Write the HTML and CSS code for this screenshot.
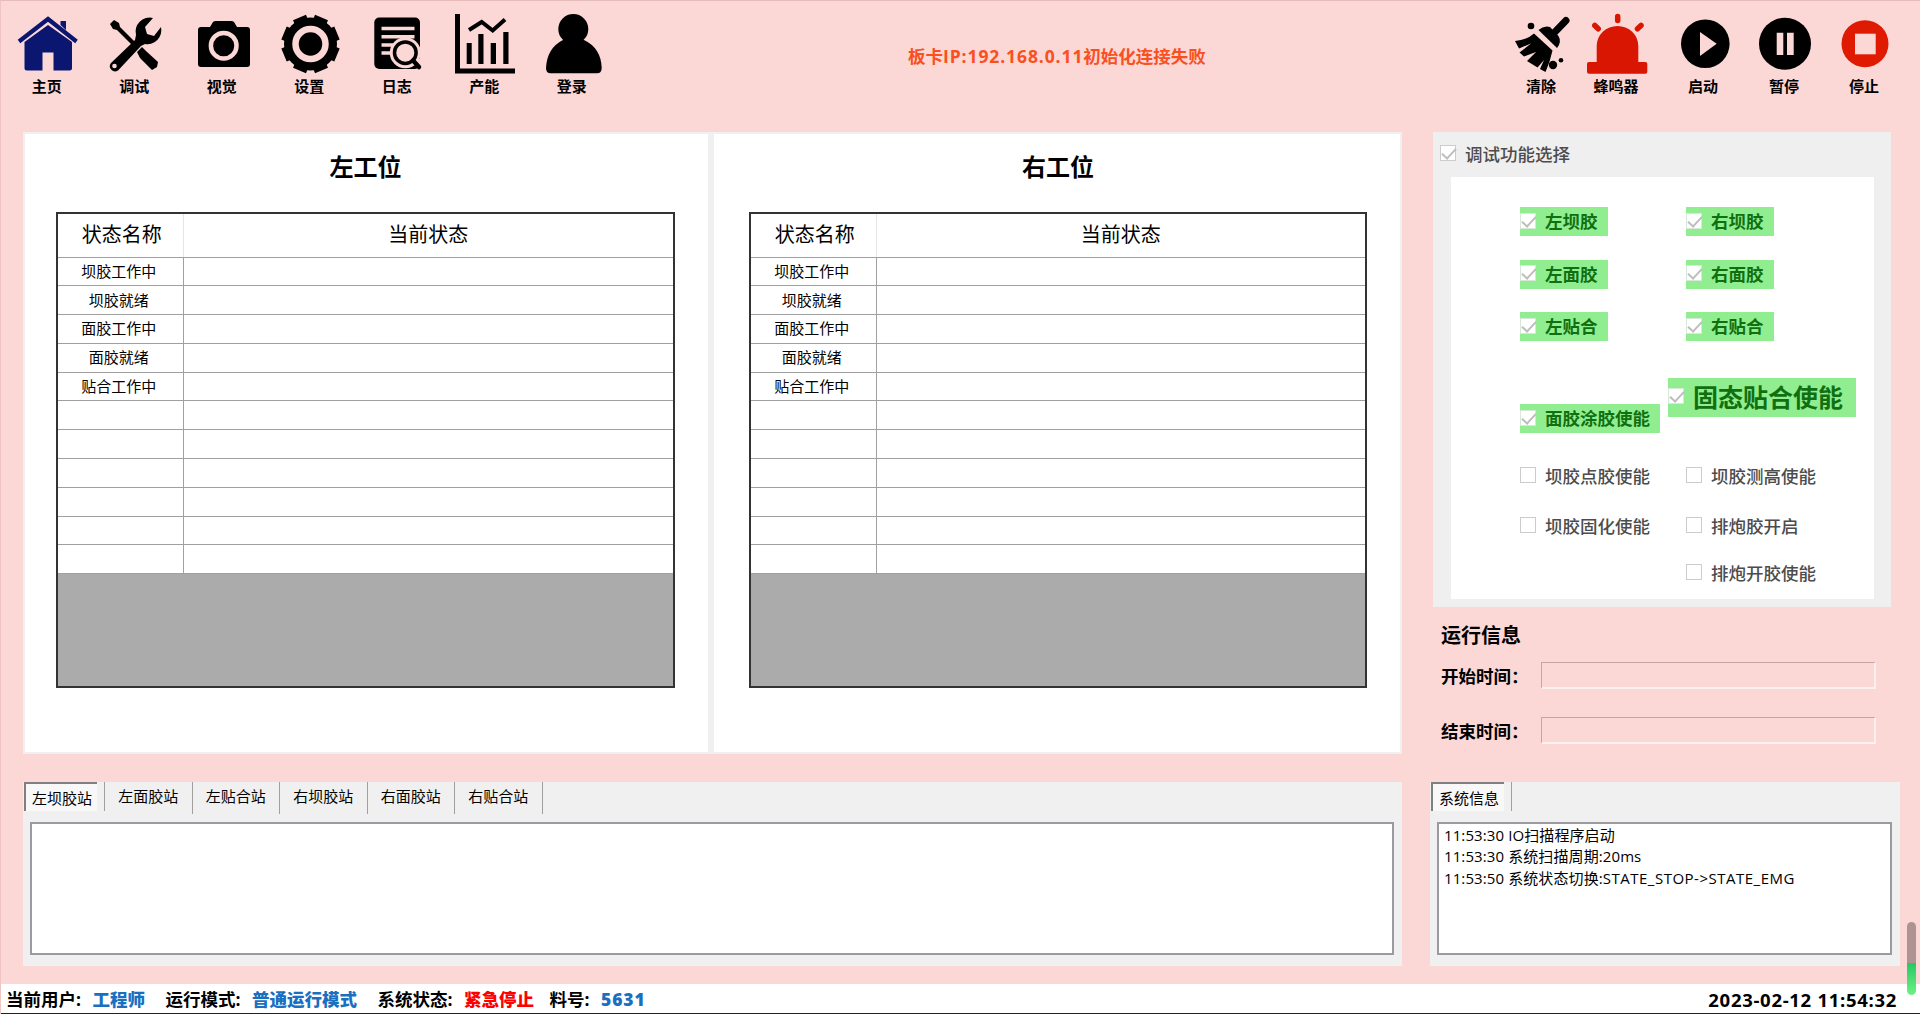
FILE: index.html
```html
<!DOCTYPE html>
<html lang="zh-CN">
<head>
    <meta charset="UTF-8">
    <meta name="viewport" content="width=device-width, initial-scale=1.0">
    <title>主页</title>
    <link rel="stylesheet" href="styles.css">
</head>
<body>
    <header class="toolbar">
        <nav class="menu">
            <button class="tool">
                <svg viewBox="0 0 64 64" fill="#0a1670"><path d="M45.500 9H51V18L45.500 13Z"/><path d="M4 29.500L33 7L61.500 29.500" fill="none" stroke="#0a1670" stroke-width="4.200"/><path d="M9.500 30L33 13L57 30V56Q57 58.500 54.500 58.500H38.500V40.500H27.500V58.500H12Q9.500 58.500 9.500 56Z"/></svg>
                <span>主页</span>
            </button>
            <button class="tool">
                <svg viewBox="0 0 64 64"><path d="M8 12L12 8L17 11L18 15L34 31L31 34L15 18L11 17Z"/><path d="M35 40L40 35L44 39L56 50L55 55L50 58L38 46Z"/><path d="M51 6A14 14 0 0 0 34 23L33 28L9 51A5.200 5.200 0 0 0 16 58.500L39 34L43 32A14 14 0 0 0 59 15L52 24L45 22L43 15Z"/><circle cx="12.500" cy="54" r="2.300" class="cut"/></svg>
                <span>调试</span>
            </button>
            <button class="tool">
                <svg viewBox="0 0 64 64"><path d="M11 15H20L23 10Q24 9 26 9H41Q43 9 44 10L47 15H57Q60 15 60 18V52Q60 55 57 55H11Q8 55 8 52V18Q8 15 11 15Z"/><circle cx="33.700" cy="33.700" r="12.800" fill="none" class="ring"/></svg>
                <span>视觉</span>
            </button>
            <button class="tool">
                <svg viewBox="0 0 64 64"><circle cx="33.500" cy="32" r="26.500"/><g stroke="#000" stroke-width="14"><path d="M22.500 5.500L44.500 58.500M44.500 5.500L22.500 58.500M7 21L60 43M60 21L7 43"/></g><circle cx="33.500" cy="32" r="15" fill="none" class="ring wide"/></svg>
                <span>设置</span>
            </button>
            <button class="tool">
                <svg viewBox="0 0 64 64"><rect x="9.300" y="5.500" width="45.700" height="51.500" rx="5"/><path d="M16.500 16.500H49.500M16.500 24.700H49.500M16.500 33H28M16.500 41H26" class="line"/><circle cx="40.300" cy="40.700" r="15.500" class="cut"/><path d="M50 50L55 58L60 52L57 45Z" class="cut"/><circle cx="40.300" cy="40.700" r="10.800" fill="none" stroke="#000" stroke-width="3.500"/><path d="M48 48.500L54 55" stroke="#000" stroke-width="4.500" stroke-linecap="round"/></svg>
                <span>日志</span>
            </button>
            <button class="tool">
                <svg viewBox="0 0 64 64"><path d="M3 2H8V56.500H63V61.500H3ZM14.700 31H19.700V52H14.700ZM26.300 22H31.500V52H26.300ZM38.700 31H44V52H38.700ZM51.300 20H56.500V52H51.300Z"/><path d="M17 18L29.700 10L40.700 18.500L53 7.500" fill="none" stroke="#000" stroke-width="4"/></svg>
                <span>产能</span>
            </button>
            <button class="tool">
                <svg viewBox="0 0 64 64"><circle cx="33.300" cy="17" r="15"/><path d="M23 28H44Q61 36 61.700 56Q61.700 61.300 57 61.300H10.500Q6 61.300 6 56Q7 36 23 28Z"/></svg>
                <span>登录</span>
            </button>
        </nav>
        <p class="alarm">板卡<span>IP:192.168.0.11</span>初始化连接失败</p>
        <div class="control">
            <button class="tool clear">
                <svg viewBox="0 0 64 64"><path d="M57 8.500L44 22" stroke="#000" stroke-width="7" stroke-linecap="round"/><path d="M29.500 18Q35 13 41 15L49.500 24Q53 30 48 36Z"/><path d="M25 21.500L43.500 38.500Q41 50 36.500 60L31 57L35 48L28.500 55.500L18 49L27 40L15 44.500L10.500 40.500L22 31.500L10 36.500L6 29Q18 28 25 21.500Z"/><circle cx="22" cy="14" r="3.300"/><circle cx="44" cy="53" r="4.200"/><circle cx="52" cy="48.300" r="2.300"/></svg>
                <span>清除</span>
            </button>
            <button class="tool buzzer">
                <svg viewBox="0 0 64 64" fill="#d81601"><path d="M12.700 51V34A20.800 20 0 0 1 54.300 34V51Z"/><rect x="3" y="50" width="60.300" height="11.700" rx="2"/><path d="M33.700 4.500V8.500M10.800 13.500L14.200 16.800M57 13.500L53.500 16.800" stroke="#d81601" stroke-width="5.500" stroke-linecap="round"/></svg>
                <span>蜂鸣器</span>
            </button>
            <button class="tool start">
                <svg viewBox="0 0 64 64"><circle cx="34.300" cy="31.700" r="24.300"/><path d="M29 20L45.700 31.700L29 44Z" class="cut"/></svg>
                <span>启动</span>
            </button>
            <button class="tool pause">
                <svg viewBox="0 0 64 64"><circle cx="33" cy="31.700" r="26"/><path d="M24.700 20.700H31.300V43H24.700ZM35 20.700H41.700V43H35Z" class="cut"/></svg>
                <span>暂停</span>
            </button>
            <button class="tool stop">
                <svg viewBox="0 0 64 64" fill="#e01a00"><circle cx="33" cy="31.700" r="23.500"/><path d="M23 21.700H43.700V42.300H23Z" class="cut"/></svg>
                <span>停止</span>
            </button>
        </div>
    </header>

    <main class="content">
        <div class="left">
            <div class="stations">
                <section class="station">
                    <h2>左工位</h2>
                    <div class="grid-view">
                        <table>
                            <tr><th>状态名称</th><th>当前状态</th></tr>
                            <tr><td>坝胶工作中</td><td></td></tr>
                            <tr><td>坝胶就绪</td><td></td></tr>
                            <tr><td>面胶工作中</td><td></td></tr>
                            <tr><td>面胶就绪</td><td></td></tr>
                            <tr><td>贴合工作中</td><td></td></tr>
                            <tr><td></td><td></td></tr>
                            <tr><td></td><td></td></tr>
                            <tr><td></td><td></td></tr>
                            <tr><td></td><td></td></tr>
                            <tr><td></td><td></td></tr>
                            <tr><td></td><td></td></tr>
                        </table>
                    </div>
                </section>
                <section class="station">
                    <h2>右工位</h2>
                    <div class="grid-view">
                        <table>
                            <tr><th>状态名称</th><th>当前状态</th></tr>
                            <tr><td>坝胶工作中</td><td></td></tr>
                            <tr><td>坝胶就绪</td><td></td></tr>
                            <tr><td>面胶工作中</td><td></td></tr>
                            <tr><td>面胶就绪</td><td></td></tr>
                            <tr><td>贴合工作中</td><td></td></tr>
                            <tr><td></td><td></td></tr>
                            <tr><td></td><td></td></tr>
                            <tr><td></td><td></td></tr>
                            <tr><td></td><td></td></tr>
                            <tr><td></td><td></td></tr>
                            <tr><td></td><td></td></tr>
                        </table>
                    </div>
                </section>
            </div>
            <section class="tab-panel">
                <div class="tabs">
                    <span class="tab active">左坝胶站</span>
                    <span class="tab">左面胶站</span>
                    <span class="tab">左贴合站</span>
                    <span class="tab">右坝胶站</span>
                    <span class="tab">右面胶站</span>
                    <span class="tab">右贴合站</span>
                </div>
                <div class="log"></div>
            </section>
        </div>

        <aside class="right">
            <section class="debug">
                <label class="check title"><i class="box on"></i>调试功能选择</label>
                <div class="options">
                    <div class="column">
                        <label class="check green"><i class="box on"></i>左坝胶</label>
                        <label class="check green"><i class="box on"></i>左面胶</label>
                        <label class="check green"><i class="box on"></i>左贴合</label>
                        <label class="check green coat"><i class="box on"></i>面胶涂胶使能</label>
                        <label class="check first"><i class="box"></i>坝胶点胶使能</label>
                        <label class="check second"><i class="box"></i>坝胶固化使能</label>
                    </div>
                    <div class="column">
                        <label class="check green"><i class="box on"></i>右坝胶</label>
                        <label class="check green"><i class="box on"></i>右面胶</label>
                        <label class="check green"><i class="box on"></i>右贴合</label>
                        <label class="check green solid"><i class="box on"></i>固态贴合使能</label>
                        <label class="check first"><i class="box"></i>坝胶测高使能</label>
                        <label class="check second"><i class="box"></i>排炮胶开启</label>
                        <label class="check third"><i class="box"></i>排炮开胶使能</label>
                    </div>
                </div>
            </section>
            <section class="run-info">
                <h3>运行信息</h3>
                <div class="field"><span>开始时间：</span><div class="value"></div></div>
                <div class="field"><span>结束时间：</span><div class="value"></div></div>
            </section>
            <section class="tab-panel system">
                <div class="tabs"><span class="tab active">系统信息</span></div>
                <div class="log">
                    <p>11:53:30 IO扫描程序启动</p>
                    <p>11:53:30 系统扫描周期:20ms</p>
                    <p>11:53:50 系统状态切换:<span>STATE_STOP-&gt;STATE_EMG</span></p>
                </div>
            </section>
        </aside>
    </main>

    <footer class="status">
        <span class="item">当前用户:<b>工程师</b></span>
        <span class="item">运行模式:<b>普通运行模式</b></span>
        <span class="item">系统状态:<b class="emg">紧急停止</b></span>
        <span class="item part">料号:<b>5631</b></span>
        <time>2023-02-12 11:54:32</time>
    </footer>
    <div class="level"></div>
</body>
</html>
```
FILE: styles.css
```css
* {
    box-sizing: border-box;
}
body {
    margin: 0;
    height: 1014px;
    display: flex;
    flex-direction: column;
    overflow: hidden;
    background-color: #fbd7d5;
    color: #000;
    font-family: "Open Sans", "Noto Sans CJK SC", sans-serif;
    font-size: 15px;
    border-top: 1px solid #e6bcbb;
    border-left: 1px solid #efc6c4;
}
h2, h3, p {
    margin: 0;
}

/* toolbar */
.toolbar {
    display: flex;
    height: 131px;
    padding: 11px 0 0 2px;
}
.menu, .control {
    display: flex;
}
.menu {
    width: 905px;
}
.tool {
    width: 87.5px;
    height: 88px;
    padding: 0;
    border: 0;
    background: none;
    display: flex;
    flex-direction: column;
    align-items: center;
    font-family: inherit;
    font-size: 15px;
    font-weight: 700;
    line-height: 20px;
    color: #000;
}
.tool svg {
    width: 64px;
    height: 64px;
    flex: none;
}
.cut {
    fill: #fbd7d5;
}
.ring {
    stroke: #fbd7d5;
    stroke-width: 4.5;
}
.ring.wide {
    stroke-width: 6.5;
}
.line {
    stroke: #fbd7d5;
    stroke-width: 3.5;
}
.alarm {
    width: 596px;
    padding-top: 32px;
    color: #f8501e;
    font-size: 17.5px;
    font-weight: 700;
    line-height: 24px;
}
.alarm span {
    letter-spacing: 0.9px;
}
.clear {
    width: 74px;
}
.buzzer {
    width: 76px;
}
.start {
    width: 98px;
}
.pause {
    width: 64px;
}
.stop {
    width: 96px;
}

/* main area */
.content {
    display: flex;
    gap: 28px;
    height: 852px;
    padding-left: 22px;
}
.left {
    width: 1379px;
}
.stations {
    display: flex;
    gap: 6px;
    height: 622px;
    margin-bottom: 28px;
    padding: 2px;
    background-color: #f0f0f0;
}
.station {
    width: 683px;
    padding: 0 33px 0 31px;
    background-color: #fff;
}
.station + .station {
    width: 686px;
    padding: 0 33px 0 35px;
}
.station h2 {
    height: 78px;
    padding-top: 16px;
    text-align: center;
    font-size: 24px;
    font-family: "Liberation Serif", "Noto Sans CJK SC", serif;
    font-weight: 700;
    line-height: 36px;
}
.grid-view {
    height: 476px;
    border: 2px solid #333;
    background-color: #ababab;
}
table {
    width: 100%;
    border-collapse: collapse;
    table-layout: fixed;
    background-color: #fff;
}
tr {
    height: 28.8px;
}
tr:first-child {
    height: 43px;
}
th, td {
    padding: 0;
    border-bottom: 1px solid #a0a0a0;
    text-align: center;
    line-height: 22px;
}
th {
    font-size: 20px;
    font-weight: 400;
}
th:first-child {
    width: 125px;
    padding-left: 3px;
    border-right: 1px solid #e5e5e5;
}
td:first-child {
    padding-right: 3px;
    padding-bottom: 1px;
    border-right: 1px solid #a0a0a0;
}

/* tab panels */
.tab-panel {
    height: 184px;
    padding: 0 8px 0 7px;
    background-color: #f0f0f0;
}
.tabs {
    display: flex;
    height: 40px;
    margin-left: -6px;
}
.tab {
    width: 87.5px;
    height: 32px;
    border-right: 1px solid #a0a0a0;
    text-align: center;
    line-height: 28px;
}
.tab.active {
    width: 73px;
    height: 29px;
    margin-right: 8px;
    padding-left: 1px;
    border: solid #808080;
    border-width: 2px 0 0 2px;
    background-color: #f8f8f8;
    box-shadow: 7px 0 0 #f0f0f0, 8px 0 0 #a0a0a0;
    line-height: 28px;
}
.log {
    height: 133px;
    padding: 1px 5px;
    border: 2px solid #9a9aa0;
    background-color: #fff;
}
.log p {
    line-height: 21.3px;
    letter-spacing: 0.1px;
}
.log span {
    letter-spacing: 0.5px;
}

/* right side */
.right {
    width: 470px;
}
.debug {
    width: 458px;
    height: 475px;
    margin-left: 3px;
    padding: 0 17px 0 7px;
    background-color: #f0eff0;
}
.check {
    display: flex;
    align-items: center;
    width: max-content;
    height: 29px;
    padding-bottom: 1px;
    color: #4c4c4c;
    font-size: 17.5px;
    font-weight: 500;
}
.check.title {
    height: 45px;
    padding-bottom: 3px;
}
.box {
    position: relative;
    width: 16px;
    height: 16px;
    margin-right: 9px;
    border: 1px solid #ccc;
    background-color: #fff;
}
.box.on::after {
    content: "";
    position: absolute;
    left: 1px;
    top: 2px;
    width: 12px;
    height: 6px;
    border: solid #bdbdbd;
    border-width: 0 0 2px 2px;
    transform: rotate(-47deg);
}
.options {
    display: flex;
    height: 422px;
    margin-left: 11px;
    padding: 30px 0 0 69px;
    background-color: #fff;
}
.column {
    width: 166px;
}
.green {
    margin-bottom: 23.7px;
    padding-right: 10px;
    padding-bottom: 2px;
    background-color: #90ee90;
    color: #107010;
    font-weight: 700;
}
.green .box {
    border-color: #d8e8d8;
}
.coat {
    margin: 63px 0 28px;
}
.solid {
    height: 39px;
    margin: 37px 0 44px -18px;
    padding-right: 13px;
    padding-bottom: 3px;
    font-size: 25px;
}
.second {
    margin-top: 21px;
}
.third {
    margin-top: 18px;
}
.run-info {
    height: 175px;
    padding: 14px 0 0 11px;
}
.run-info h3 {
    font-size: 20px;
    line-height: 29px;
}
.field {
    display: flex;
    align-items: center;
    height: 27px;
    margin: 12px 0 28px;
    font-size: 17.5px;
    font-weight: 700;
}
.field span {
    width: 100px;
}
.value {
    width: 335px;
    height: 27px;
    border: 2px solid;
    border-color: #c4a5a5 #fff0f0 #fff0f0 #c4a5a5;
    border-width: 1px 2px 2px 1px;
}
.system .log {
    width: 455px;
}

/* status bar */
.status {
    display: flex;
    height: 30px;
    padding: 0 23px 0 5px;
    border-bottom: 1px solid #222;
    background-color: #fff;
    font-size: 17.5px;
    font-weight: 700;
    line-height: 31px;
}
.item {
    margin-right: 20.5px;
}
.item b {
    margin-left: 11.5px;
    color: #1b6fc0;
}
.item .emg {
    color: #f00;
}
.item.part {
    margin-left: -5px;
}
.item.part b {
    letter-spacing: 0.9px;
}
.status time {
    margin-left: auto;
    font-size: 18.5px;
    letter-spacing: 0.7px;
}
.level {
    position: absolute;
    right: 4px;
    top: 922px;
    width: 9px;
    height: 73px;
    border-radius: 5px;
    background: linear-gradient(#ad9493 41px, #26c765 41px, #6df283);
}
```
